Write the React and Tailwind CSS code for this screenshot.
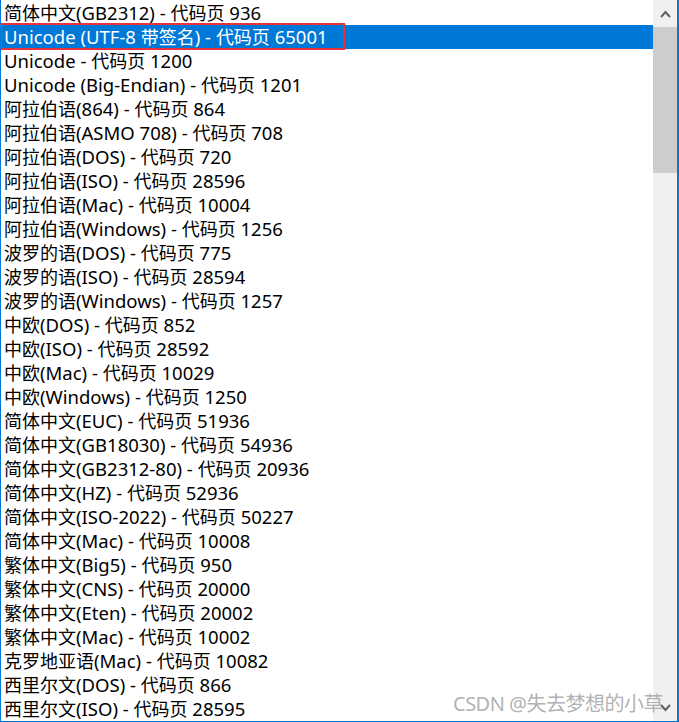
const encodings = [
    '简体中文(GB2312) - 代码页 936',
    'Unicode (UTF-8 带签名) - 代码页 65001',
    'Unicode - 代码页 1200',
    'Unicode (Big-Endian) - 代码页 1201',
    '阿拉伯语(864) - 代码页 864',
    '阿拉伯语(ASMO 708) - 代码页 708',
    '阿拉伯语(DOS) - 代码页 720',
    '阿拉伯语(ISO) - 代码页 28596',
    '阿拉伯语(Mac) - 代码页 10004',
    '阿拉伯语(Windows) - 代码页 1256',
    '波罗的语(DOS) - 代码页 775',
    '波罗的语(ISO) - 代码页 28594',
    '波罗的语(Windows) - 代码页 1257',
    '中欧(DOS) - 代码页 852',
    '中欧(ISO) - 代码页 28592',
    '中欧(Mac) - 代码页 10029',
    '中欧(Windows) - 代码页 1250',
    '简体中文(EUC) - 代码页 51936',
    '简体中文(GB18030) - 代码页 54936',
    '简体中文(GB2312-80) - 代码页 20936',
    '简体中文(HZ) - 代码页 52936',
    '简体中文(ISO-2022) - 代码页 50227',
    '简体中文(Mac) - 代码页 10008',
    '繁体中文(Big5) - 代码页 950',
    '繁体中文(CNS) - 代码页 20000',
    '繁体中文(Eten) - 代码页 20002',
    '繁体中文(Mac) - 代码页 10002',
    '克罗地亚语(Mac) - 代码页 10082',
    '西里尔文(DOS) - 代码页 866',
    '西里尔文(ISO) - 代码页 28595',
];

// YaHei-style mix: Latin runs a bit larger than the CJK runs
const Label = ({ text }) => (
    <span className="leading-none">
        {text.split(/([\u4e00-\u9fff]+)/).filter(Boolean).map((part, i) =>
            /[\u4e00-\u9fff]/.test(part) ? (
                <span key={i} className="text-[18px] font-['Noto_Sans_CJK_SC',sans-serif]">{part}</span>
            ) : (
                <span key={i} className="text-[18.5px] font-['Noto_Sans',sans-serif]">{part}</span>
            )
        )}
    </span>
);

const App = () => {
    return (
        <div className="relative w-[679px] h-[722px] flex bg-white border-l border-r-2 border-b border-[#0078d7] overflow-hidden font-['Noto_Sans','Noto_Sans_CJK_SC',sans-serif]">
            {/* List */}
            <div className="flex-1 pt-px">
                {encodings.map((name, i) => (
                    <div
                        key={name}
                        className={
                            i === 1
                                ? 'relative h-6 pl-[3px] flex items-center leading-none whitespace-nowrap bg-[#0078d7] text-white'
                                : 'h-6 pl-[3px] flex items-center leading-none whitespace-nowrap text-black'
                        }
                    >
                        <Label text={name} />
                        {i === 1 && (
                            <div className="absolute left-[-1px] top-[-2px] w-[345px] h-[27px] border-2 border-[#e8333b]" />
                        )}
                    </div>
                ))}
            </div>

            {/* Scrollbar */}
            <div className="w-6 bg-[#f0f0f0] flex flex-col">
                <div className="h-[27px] flex items-center justify-center">
                    <svg width="11" height="8" viewBox="0 0 11 8">
                        <path d="M1 7 L5.5 2 L10 7" fill="none" stroke="#606060" strokeWidth="2" />
                    </svg>
                </div>
                <div className="h-[146px] bg-[#cdcdcd]" />
                <div className="flex-1" />
                <div className="h-[27px] flex items-center justify-center">
                    <svg width="11" height="8" viewBox="0 0 11 8">
                        <path d="M1 1 L5.5 6 L10 1" fill="none" stroke="#606060" strokeWidth="2" />
                    </svg>
                </div>
            </div>

            {/* Watermark */}
            <div className="absolute left-[452px] bottom-[7px] text-[20px] leading-none text-[#a8a8a8]/90 whitespace-nowrap tracking-[-0.5px]">
                CSDN @失去梦想的小草
            </div>
        </div>
    );
};

export default App;
